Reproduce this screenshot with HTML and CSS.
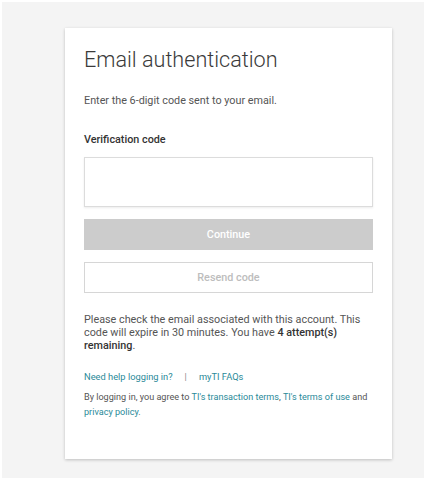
FILE: index.html
```html
<!DOCTYPE html>
<html lang="en">
<head>
<meta charset="utf-8">
<title>Email authentication</title>
<link rel="stylesheet" href="styles.css">
</head>
<body>
<div class="page">
  <main class="card">
    <h1 class="title">Email authentication</h1>
    <p class="intro">Enter the 6-digit code sent to your email.</p>
    <label class="label" for="code">Verification code</label>
    <input class="input" id="code" type="text">
    <button class="btn btn-primary" type="button">Continue</button>
    <button class="btn btn-secondary" type="button">Resend code</button>
    <p class="notice">Please check the email associated with this account. This code will expire in 30 minutes. You have <strong>4 attempt(s)</strong> <strong>remaining</strong>.</p>
    <div class="help">
      <a class="link" href="#">Need help logging in?</a>
      <span class="sep">|</span>
      <a class="link" href="#">myTI FAQs</a>
    </div>
    <p class="legal">By logging in, you agree to <a class="link" href="#">TI's transaction terms</a>, <a class="link" href="#">TI's terms of use</a> and <a class="link" href="#">privacy policy</a>.</p>
  </main>
</div>
</body>
</html>
```
FILE: styles.css
```css
* { box-sizing: border-box; }
html, body { margin: 0; padding: 0; background: #ffffff; }
body { font-family: Roboto, "Liberation Sans", sans-serif; color: #555; }
.page {
  margin: 2px;
  height: 476px;
  background: #f4f4f4;
  padding: 26px 0 0 63px;
}
.card {
  width: 327px;
  height: 431px;
  background: #fff;
  box-shadow: 0 1px 3px rgba(0,0,0,0.22);
  padding: 18px 19px 0 19px;
  display: flex;
  flex-direction: column;
}
.title {
  margin: 0;
  font-size: 21.6px;
  line-height: 28px;
  font-weight: 300;
  color: #3a3a3a;
}
.intro {
  margin: 19px 0 0;
  font-size: 10.8px;
  line-height: 16px;
  color: #555;
}
.label {
  margin-top: 23px;
  font-size: 10.8px;
  line-height: 16px;
  font-weight: 500;
  color: #333;
}
.input {
  margin-top: 9px;
  height: 50px;
  width: 100%;
  border: 1px solid #dcdcdc;
  box-shadow: 0 1px 2px rgba(0,0,0,0.08);
  background: #fff;
  outline: none;
}
.btn {
  height: 31px;
  width: 100%;
  margin-top: 12px;
  font-family: inherit;
  font-size: 10.8px;
  font-weight: 500;
  cursor: default;
}
.btn-primary {
  background: #cccccc;
  border: none;
  color: #fff;
}
.btn-secondary {
  background: #fff;
  border: 1px solid #d6d6d6;
  color: #bdbdbd;
}
.notice {
  margin: 20px 0 0;
  font-size: 10.8px;
  line-height: 13px;
  color: #555;
}
.notice strong { font-weight: 500; color: #333; }
.help {
  margin-top: 18px;
  font-size: 9.3px;
  line-height: 14px;
  display: flex;
  gap: 12px;
}
.sep { color: #8a8a8a; }
.link { color: #2a8a99; text-decoration: none; }
.legal {
  margin: 6px 0 0;
  font-size: 9.1px;
  line-height: 15px;
  color: #555;
}
```
